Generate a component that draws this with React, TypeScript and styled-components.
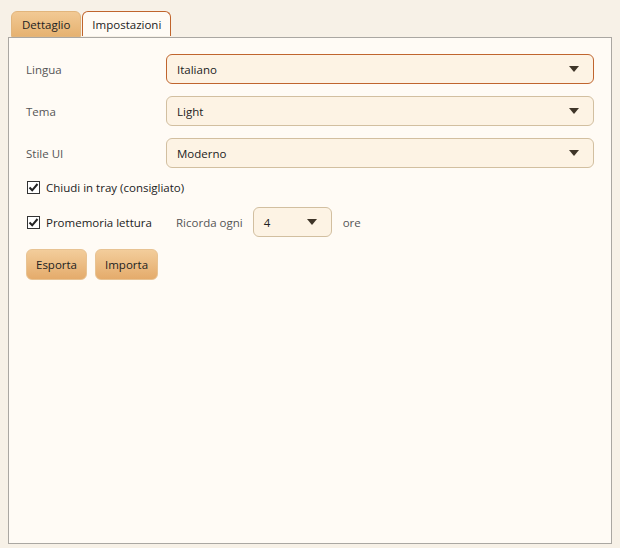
import React, { useState } from "react";
import styled, { createGlobalStyle } from "styled-components";

const Global = createGlobalStyle`
  html, body {
    margin: 0;
    padding: 0;
    background: #f7f1e7;
    font-family: "Open Sans", "Noto Sans", sans-serif;
    font-size: 11.5px;
    color: #222;
  }
`;

const Page = styled.div`
  width: 620px;
  height: 548px;
  box-sizing: border-box;
  padding: 11px 8px 4px 8px;
  display: flex;
  flex-direction: column;
`;

const TabBar = styled.div`
  display: flex;
  padding-left: 3px;
  height: 26px;
  align-items: flex-end;
  gap: 1px;
`;

const Tab = styled.div<{ $active?: boolean }>`
  height: ${(p) => (p.$active ? "25px" : "26px")};
  box-sizing: border-box;
  padding: 0 ${(p) => (p.$active ? "9px" : "10px")};
  display: flex;
  align-items: center;
  border-radius: 6px 6px 0 0;
  border: 1px solid ${(p) => (p.$active ? "#c0642c" : "#e2b57c")};
  border-bottom: ${(p) => (p.$active ? "none" : "1px solid #e2b57c")};
  background: ${(p) =>
    p.$active ? "#fffbf5" : "linear-gradient(#f2c994, #e6b271)"};
  color: #222;
  margin-bottom: ${(p) => (p.$active ? "1px" : "0")};
`;

const Panel = styled.div`
  flex: 1;
  background: #fffbf5;
  border: 1px solid #aaa7a2;
  padding: 16px 17px;
  display: flex;
  flex-direction: column;
`;

const Row = styled.div`
  display: flex;
  align-items: center;
  height: 30px;
  margin-bottom: 12px;
`;

const Label = styled.div`
  width: 140px;
  color: #555;
`;

const Combo = styled.div<{ $focused?: boolean; $width?: string }>`
  ${(p) => (p.$width ? `width: ${p.$width};` : "flex: 1;")}
  height: 30px;
  box-sizing: border-box;
  border: 1px solid ${(p) => (p.$focused ? "#c0652e" : "#d2bfa0")};
  border-radius: 6px;
  background: #fdf3e4;
  display: flex;
  align-items: center;
  padding: 0 14px 0 10px;
  color: #222;
`;

const ComboText = styled.span`
  flex: 1;
`;

const Arrow = styled.span`
  width: 0;
  height: 0;
  border-left: 5px solid transparent;
  border-right: 5px solid transparent;
  border-top: 6px solid #3f3528;
`;

const CheckRow = styled.label<{ $mt?: number }>`
  display: flex;
  align-items: center;
  margin-left: 1px;
  margin-top: ${(p) => p.$mt ?? 0}px;
  height: 30px;
`;

const Box = styled.span`
  width: 13px;
  height: 13px;
  box-sizing: border-box;
  border: 1px solid #333;
  background: #fff;
  display: inline-flex;
  align-items: center;
  justify-content: center;
  margin-right: 6px;
`;

const CheckText = styled.span`
  color: #222;
  width: 130px;
`;

const Muted = styled.span`
  color: #555;
  margin-right: 10px;
`;

const Ore = styled.span`
  color: #555;
  margin-left: 11px;
`;

const Buttons = styled.div`
  display: flex;
  gap: 8px;
  margin-top: 12px;
`;

const Button = styled.button`
  height: 31px;
  box-sizing: border-box;
  padding: 0 9px;
  border-radius: 6px;
  border: 1px solid #e8c393;
  background: linear-gradient(#f3cd9b, #e4ab6b);
  font-family: inherit;
  font-size: 11.5px;
  color: #222;
`;

const Check = () => (
  <Box>
    <svg width="11" height="11" viewBox="0 0 11 11">
      <path d="M1.5 5.5 L4.2 8.3 L9.5 2" fill="none" stroke="#222" strokeWidth="2" />
    </svg>
  </Box>
);

export default function App() {
  const [tab] = useState("Impostazioni");
  const rows = [
    { label: "Lingua", value: "Italiano", focused: true },
    { label: "Tema", value: "Light" },
    { label: "Stile UI", value: "Moderno" },
  ];
  return (
    <>
      <Global />
      <Page>
        <TabBar>
          <Tab $active={tab === "Dettaglio"}>Dettaglio</Tab>
          <Tab $active={tab === "Impostazioni"}>Impostazioni</Tab>
        </TabBar>
        <Panel>
          {rows.map((r) => (
            <Row key={r.label}>
              <Label>{r.label}</Label>
              <Combo $focused={r.focused}>
                <ComboText>{r.value}</ComboText>
                <Arrow />
              </Combo>
            </Row>
          ))}
          <CheckRow $mt={-8}>
            <Check />
            <span>Chiudi in tray (consigliato)</span>
          </CheckRow>
          <CheckRow $mt={5}>
            <Check />
            <CheckText>Promemoria lettura</CheckText>
            <Muted>Ricorda ogni</Muted>
            <Combo $width="79px">
              <ComboText>4</ComboText>
              <Arrow />
            </Combo>
            <Ore>ore</Ore>
          </CheckRow>
          <Buttons>
            <Button>Esporta</Button>
            <Button>Importa</Button>
          </Buttons>
        </Panel>
      </Page>
    </>
  );
}
